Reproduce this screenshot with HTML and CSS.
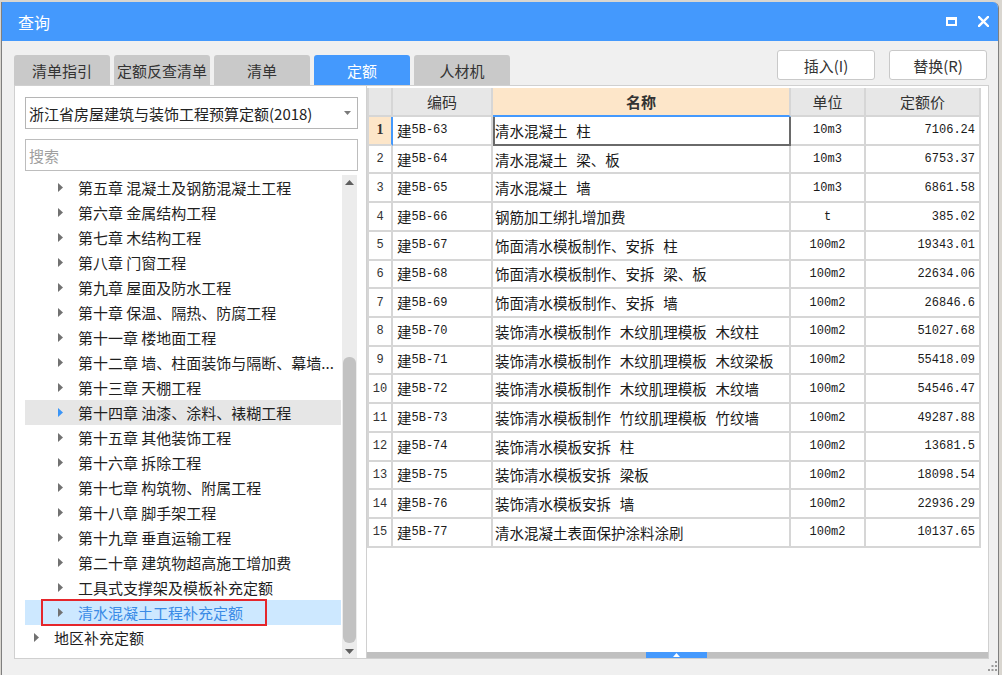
FILE: index.html
```html
<!DOCTYPE html>
<html lang="zh-CN">
<head>
<meta charset="utf-8">
<title>查询</title>
<link rel="stylesheet" href="styles.css">
</head>
<body>
<div class="window">
  <div class="titlebar">
    <span class="title">查询</span>
    <div class="title-btns">
      <svg class="ico-max" width="11" height="9" viewBox="0 0 11 9"><path d="M0 0H11V9H0Z M2 3V7H9V3Z" fill="#fff" fill-rule="evenodd"/></svg>
      <svg class="ico-close" width="11" height="11" viewBox="0 0 11 11"><path d="M1 1L10 10M10 1L1 10" stroke="#fff" stroke-width="2.4" stroke-linecap="square"/></svg>
    </div>
  </div>

  <div class="toolbar">
    <div class="tabs">
      <div class="tab">清单指引</div>
      <div class="tab">定额反查清单</div>
      <div class="tab">清单</div>
      <div class="tab active">定额</div>
      <div class="tab">人材机</div>
    </div>
    <div class="actions">
      <button class="btn">插入(I)</button>
      <button class="btn">替换(R)</button>
    </div>
  </div>

  <div class="main">
    <div class="left">
      <div class="combo">
        <span class="combo-text">浙江省房屋建筑与装饰工程预算定额(2018)</span>
        <svg class="combo-arrow" width="7" height="4" viewBox="0 0 7 4"><path d="M0 0H7L3.5 4Z" fill="#7a7a7a"/></svg>
      </div>
      <div class="search">搜索</div>
      <div class="tree">
        <div class="nodes">
          <div class="node l2"><span class="arr"><svg width="5" height="9" viewBox="0 0 5 9"><path d="M0 0L5 4.5L0 9Z"/></svg></span><span class="txt">第五章 混凝土及钢筋混凝土工程</span></div>
          <div class="node l2"><span class="arr"><svg width="5" height="9" viewBox="0 0 5 9"><path d="M0 0L5 4.5L0 9Z"/></svg></span><span class="txt">第六章 金属结构工程</span></div>
          <div class="node l2"><span class="arr"><svg width="5" height="9" viewBox="0 0 5 9"><path d="M0 0L5 4.5L0 9Z"/></svg></span><span class="txt">第七章 木结构工程</span></div>
          <div class="node l2"><span class="arr"><svg width="5" height="9" viewBox="0 0 5 9"><path d="M0 0L5 4.5L0 9Z"/></svg></span><span class="txt">第八章 门窗工程</span></div>
          <div class="node l2"><span class="arr"><svg width="5" height="9" viewBox="0 0 5 9"><path d="M0 0L5 4.5L0 9Z"/></svg></span><span class="txt">第九章 屋面及防水工程</span></div>
          <div class="node l2"><span class="arr"><svg width="5" height="9" viewBox="0 0 5 9"><path d="M0 0L5 4.5L0 9Z"/></svg></span><span class="txt">第十章 保温、隔热、防腐工程</span></div>
          <div class="node l2"><span class="arr"><svg width="5" height="9" viewBox="0 0 5 9"><path d="M0 0L5 4.5L0 9Z"/></svg></span><span class="txt">第十一章 楼地面工程</span></div>
          <div class="node l2"><span class="arr"><svg width="5" height="9" viewBox="0 0 5 9"><path d="M0 0L5 4.5L0 9Z"/></svg></span><span class="txt">第十二章 墙、柱面装饰与隔断、幕墙...</span></div>
          <div class="node l2"><span class="arr"><svg width="5" height="9" viewBox="0 0 5 9"><path d="M0 0L5 4.5L0 9Z"/></svg></span><span class="txt">第十三章 天棚工程</span></div>
          <div class="node l2 hover"><span class="arr"><svg width="5" height="9" viewBox="0 0 5 9"><path d="M0 0L5 4.5L0 9Z"/></svg></span><span class="txt">第十四章 油漆、涂料、裱糊工程</span></div>
          <div class="node l2"><span class="arr"><svg width="5" height="9" viewBox="0 0 5 9"><path d="M0 0L5 4.5L0 9Z"/></svg></span><span class="txt">第十五章 其他装饰工程</span></div>
          <div class="node l2"><span class="arr"><svg width="5" height="9" viewBox="0 0 5 9"><path d="M0 0L5 4.5L0 9Z"/></svg></span><span class="txt">第十六章 拆除工程</span></div>
          <div class="node l2"><span class="arr"><svg width="5" height="9" viewBox="0 0 5 9"><path d="M0 0L5 4.5L0 9Z"/></svg></span><span class="txt">第十七章 构筑物、附属工程</span></div>
          <div class="node l2"><span class="arr"><svg width="5" height="9" viewBox="0 0 5 9"><path d="M0 0L5 4.5L0 9Z"/></svg></span><span class="txt">第十八章 脚手架工程</span></div>
          <div class="node l2"><span class="arr"><svg width="5" height="9" viewBox="0 0 5 9"><path d="M0 0L5 4.5L0 9Z"/></svg></span><span class="txt">第十九章 垂直运输工程</span></div>
          <div class="node l2"><span class="arr"><svg width="5" height="9" viewBox="0 0 5 9"><path d="M0 0L5 4.5L0 9Z"/></svg></span><span class="txt">第二十章 建筑物超高施工增加费</span></div>
          <div class="node l2"><span class="arr"><svg width="5" height="9" viewBox="0 0 5 9"><path d="M0 0L5 4.5L0 9Z"/></svg></span><span class="txt">工具式支撑架及模板补充定额</span></div>
          <div class="node l2 sel"><span class="arr"><svg width="5" height="9" viewBox="0 0 5 9"><path d="M0 0L5 4.5L0 9Z"/></svg></span><span class="txt">清水混凝土工程补充定额</span><span class="mark"></span></div>
          <div class="node l1"><span class="arr"><svg width="5" height="9" viewBox="0 0 5 9"><path d="M0 0L5 4.5L0 9Z"/></svg></span><span class="txt">地区补充定额</span></div>
        </div>
        <div class="vscroll">
          <div class="vs-btn"><svg width="9" height="5" viewBox="0 0 9 5"><path d="M0 5L4.5 0L9 5Z" fill="#5f5f5f"/></svg></div>
          <div class="vs-thumb"></div>
          <div class="vs-btn bottom"><svg width="9" height="5" viewBox="0 0 9 5"><path d="M0 0H9L4.5 5Z" fill="#5f5f5f"/></svg></div>
        </div>
      </div>
    </div>

    <div class="right">
      <div class="grid">
        <div class="h rn"></div>
        <div class="h">编码</div>
        <div class="h cur">名称</div>
        <div class="h">单位</div>
        <div class="h">定额价</div>

        <div class="c rn first">1</div><div class="c code">建<span class="m">5B-63</span></div><div class="c name focus">清水混凝土 柱</div><div class="c unit">10m3</div><div class="c price">7106.24</div>
        <div class="c rn">2</div><div class="c code">建<span class="m">5B-64</span></div><div class="c name">清水混凝土 梁、板</div><div class="c unit">10m3</div><div class="c price">6753.37</div>
        <div class="c rn">3</div><div class="c code">建<span class="m">5B-65</span></div><div class="c name">清水混凝土 墙</div><div class="c unit">10m3</div><div class="c price">6861.58</div>
        <div class="c rn">4</div><div class="c code">建<span class="m">5B-66</span></div><div class="c name">钢筋加工绑扎增加费</div><div class="c unit">t</div><div class="c price">385.02</div>
        <div class="c rn">5</div><div class="c code">建<span class="m">5B-67</span></div><div class="c name">饰面清水模板制作、安拆 柱</div><div class="c unit">100m2</div><div class="c price">19343.01</div>
        <div class="c rn">6</div><div class="c code">建<span class="m">5B-68</span></div><div class="c name">饰面清水模板制作、安拆 梁、板</div><div class="c unit">100m2</div><div class="c price">22634.06</div>
        <div class="c rn">7</div><div class="c code">建<span class="m">5B-69</span></div><div class="c name">饰面清水模板制作、安拆 墙</div><div class="c unit">100m2</div><div class="c price">26846.6</div>
        <div class="c rn">8</div><div class="c code">建<span class="m">5B-70</span></div><div class="c name">装饰清水模板制作 木纹肌理模板 木纹柱</div><div class="c unit">100m2</div><div class="c price">51027.68</div>
        <div class="c rn">9</div><div class="c code">建<span class="m">5B-71</span></div><div class="c name">装饰清水模板制作 木纹肌理模板 木纹梁板</div><div class="c unit">100m2</div><div class="c price">55418.09</div>
        <div class="c rn">10</div><div class="c code">建<span class="m">5B-72</span></div><div class="c name">装饰清水模板制作 木纹肌理模板 木纹墙</div><div class="c unit">100m2</div><div class="c price">54546.47</div>
        <div class="c rn">11</div><div class="c code">建<span class="m">5B-73</span></div><div class="c name">装饰清水模板制作 竹纹肌理模板 竹纹墙</div><div class="c unit">100m2</div><div class="c price">49287.88</div>
        <div class="c rn">12</div><div class="c code">建<span class="m">5B-74</span></div><div class="c name">装饰清水模板安拆 柱</div><div class="c unit">100m2</div><div class="c price">13681.5</div>
        <div class="c rn">13</div><div class="c code">建<span class="m">5B-75</span></div><div class="c name">装饰清水模板安拆 梁板</div><div class="c unit">100m2</div><div class="c price">18098.54</div>
        <div class="c rn">14</div><div class="c code">建<span class="m">5B-76</span></div><div class="c name">装饰清水模板安拆 墙</div><div class="c unit">100m2</div><div class="c price">22936.29</div>
        <div class="c rn">15</div><div class="c code">建<span class="m">5B-77</span></div><div class="c name">清水混凝土表面保护涂料涂刷</div><div class="c unit">100m2</div><div class="c price">10137.65</div>
      </div>
      <div class="hscroll">
        <div class="hs-thumb"><svg width="7" height="4" viewBox="0 0 7 4"><path d="M0 4L3.5 0L7 4Z" fill="#fff"/></svg></div>
      </div>
    </div>
  </div>

  <div class="footer">
    <svg class="grip" width="9" height="10" viewBox="0 0 9 10" fill="#9a9a9a">
      <rect x="7" y="0" width="2" height="2"/>
      <rect x="7" y="4" width="2" height="2"/><rect x="3.5" y="4" width="2" height="2"/>
      <rect x="7" y="8" width="2" height="2"/><rect x="3.5" y="8" width="2" height="2"/><rect x="0" y="8" width="2" height="2"/>
    </svg>
  </div>
</div>
</body>
</html>
```
FILE: styles.css
```css
* { box-sizing: border-box; }
html, body { margin: 0; padding: 0; }
body {
  width: 1002px;
  height: 675px;
  overflow: hidden;
  background: #d9d6d0;
  font-family: "Noto Sans CJK SC", "Liberation Sans", sans-serif;
  color: #222;
}

.window {
  margin: 2px 0 0 1px;
  width: 998px;
  height: 673px;
  background: #f0f0f0;
  border-left: 1px solid #7f7f7f;
  border-right: 1px solid #7f7f7f;
  border-top-right-radius: 6px;
  overflow: hidden;
  display: flex;
  flex-direction: column;
}

/* title bar */
.titlebar {
  height: 39px;
  flex: none;
  background: #4499fd;
  display: flex;
  align-items: center;
  padding: 0 9px 0 16px;
}
.title { color: #fff; font-size: 16px; line-height: 20px; }
.title-btns { margin-left: auto; display: flex; align-items: center; gap: 21px; }
.title-btns svg { display: block; }

/* toolbar with tabs and buttons */
.toolbar {
  height: 44px;
  flex: none;
  display: flex;
  align-items: flex-start;
  padding: 0 11px 0 12px;
}
.tabs { display: flex; gap: 4px; margin-top: 14px; }
.tab {
  width: 96px;
  height: 30px;
  background: #c9c9c9;
  border-radius: 3px 3px 0 0;
  display: flex;
  align-items: center;
  justify-content: center;
  font-size: 15px;
  color: #333;
}
.tab.active { background: #4499fd; color: #fff; }
.actions { margin-left: auto; margin-top: 9px; display: flex; gap: 14px; }
.btn {
  width: 98px;
  height: 30px;
  background: #fff;
  border: 1px solid #c9c9c9;
  border-radius: 3px;
  font-family: "Noto Sans CJK SC", "Liberation Sans", sans-serif;
  font-size: 15px;
  color: #333;
  padding: 0;
}

/* main area */
.main {
  height: 574px;
  flex: none;
  margin: 0 9px 0 12px;
  border: 1px solid #d0d0d0;
  display: flex;
}
.left {
  width: 352px;
  flex: none;
  background: #fff;
  border-right: 1px solid #d0d0d0;
  padding: 11px 8px 0 10px;
  display: flex;
  flex-direction: column;
}
.combo {
  height: 32px;
  border: 1px solid #b5b5b5;
  display: flex;
  align-items: center;
  padding: 0 6px 0 3px;
  font-size: 15px;
  color: #222;
}
.combo-arrow { margin-left: auto; }
.search {
  margin-top: 10px;
  height: 32px;
  border: 1px solid #bdbdbd;
  display: flex;
  align-items: center;
  padding-left: 3px;
  font-size: 15px;
  color: #a0a0a0;
}
.tree {
  margin-top: 4px;
  flex: 1;
  display: flex;
  min-height: 0;
}
.nodes { width: 316px; flex: none; }
.node {
  position: relative;
  height: 25px;
  display: flex;
  align-items: center;
  font-size: 15px;
  color: #1f1f1f;
  white-space: nowrap;
}
.node.l2 { padding-left: 33px; }
.node.l1 { padding-left: 9px; }
.arr { width: 5px; margin-right: 15px; display: flex; flex: none; }
.arr svg { display: block; fill: #717171; }
.txt { flex: 1; min-width: 0; }
.node.hover { background: #e6e6e6; }
.node.hover .arr svg { fill: #3b95f6; }
.node.sel { background: #cde8ff; color: #3a8be6; }
.node.sel .mark {
  position: absolute;
  left: 16px;
  top: -1px;
  width: 226px;
  height: 27px;
  border: 2px solid #e5262b;
}

.vscroll {
  width: 15px;
  margin-left: 1px;
  background: #ececec;
  display: flex;
  flex-direction: column;
}
.vs-btn { height: 14px; display: flex; align-items: center; justify-content: center; flex: none; }
.vs-btn.bottom { margin-top: auto; }
.vs-thumb {
  margin: 168px 1px 0;
  height: 286px;
  background: #c2c2c2;
  border-radius: 6px;
}

/* grid table */
.right {
  flex: 1;
  background: #fff;
  display: flex;
  flex-direction: column;
  padding-top: 2px;
}
.grid {
  width: 614px;
  display: grid;
  grid-template-columns: 26px 100px 298px 75px 115px;
  grid-template-rows: 29px repeat(15, 28.73px);
}
.h, .c {
  border-right: 2px solid #d6d6d6;
  border-bottom: 2px solid #d6d6d6;
  display: flex;
  align-items: center;
  white-space: nowrap;
  overflow: hidden;
}
.rn { border-left: 2px solid #d6d6d6; }
.h {
  background: #e7e7e7;
  justify-content: center;
  font-size: 15px;
  color: #333;
}
.h.cur { background: #fde6c9; font-weight: bold; border-bottom-color: #4499fd; }
.c {
  font-family: "Liberation Mono", "Noto Sans CJK SC", monospace;
  font-size: 14.5px;
  color: #1a1a1a;
}
.m { font-size: 12px; }
.c.rn { justify-content: center; font-size: 12px; color: #333; }
.c.rn.first {
  background: #fde6c9;
  border-right-color: #4499fd;
  font-family: "Liberation Serif", serif;
  font-weight: bold;
  font-size: 14px;
}
.c.code { padding-left: 4px; }
.c.name { padding-left: 2px; }
.c.name.focus { border-right-color: #6a6a6a; border-bottom-color: #6a6a6a; box-shadow: inset 2px 0 0 #6a6a6a; }
.c.unit { justify-content: center; font-size: 12px; }
.c.price { justify-content: flex-end; padding-right: 4px; font-size: 12px; }

.hscroll {
  margin-top: auto;
  height: 6px;
  background: #c0c0c0;
  display: flex;
}
.hs-thumb {
  margin-left: 279px;
  width: 61px;
  height: 6px;
  background: #4499fd;
  display: flex;
  align-items: flex-start;
  justify-content: center;
  padding-top: 1px;
}
.hs-thumb svg { display: block; }

.footer {
  flex: 1;
  display: flex;
  justify-content: flex-end;
  align-items: flex-start;
  padding: 2px 1px 0 0;
}
.grip { display: block; }
```
